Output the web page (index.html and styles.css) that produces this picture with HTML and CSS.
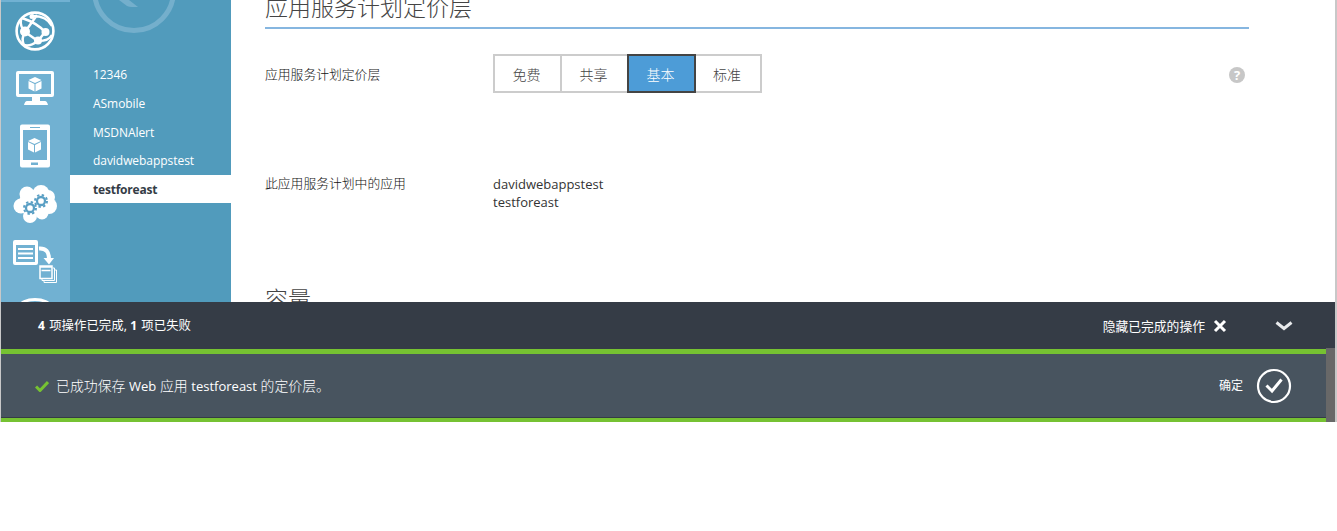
FILE: index.html
```html
<!DOCTYPE html>
<html lang="zh-CN">
<head>
<meta charset="utf-8">
<title>应用服务计划</title>
<link rel="stylesheet" href="styles.css">
</head>
<body>
<div class="portal">
  <div class="workspace">
    <nav class="rail">
      <a class="rail-item active"><svg width="44" height="44" viewBox="0 0 44 44" fill="none" stroke="#fff"><circle cx="22" cy="22" r="18.400" stroke-width="2.600"/><path d="M12 23L24 6M12 23L25 32L32 23M9 9C18 12 26 16 32 23M20 7C28 7 35 9 39 17M8 10C7 16 9 20 12 23M12 23C9 28 9 32 11 36M25 32C18 37 14 37 11 36M25 32C32 32 37 30 39 26" stroke-width="2.500"/><g fill="#fff" stroke="none"><circle cx="12" cy="22.500" r="5"/><circle cx="32.500" cy="23" r="4"/><circle cx="25" cy="31.500" r="4"/><circle cx="19" cy="7.500" r="2.500"/></g></svg></a>
      <a class="rail-item"><svg width="44" height="44" viewBox="0 0 44 44"><path fill="#fff" fill-rule="evenodd" d="M5 5H39Q41 5 41 7V29Q41 31 39 31H27V35H32Q34 35 35 39H11Q12 35 14 35H19V31H5Q3 31 3 29V7Q3 5 5 5ZM6 8V28H38V8Z"/><path fill="#fff" d="M22 11L28.500 14L22 17L15.500 14ZM15.500 15L21.500 18V25.500L15.500 22.500ZM28.500 15L22.500 18V25.500L28.500 22.500Z"/></svg></a>
      <a class="rail-item"><svg width="44" height="44" viewBox="0 0 44 44"><path fill="#fff" fill-rule="evenodd" d="M9 0.500H35Q37 0.500 37 2.500V41.500Q37 43.500 35 43.500H9Q7 43.500 7 41.500V2.500Q7 .5 9 .5ZM10 6V36H34V6ZM17 3V4H27V3ZM18 38.500V41H25V38.500Z"/><path fill="#fff" d="M21.500 14L28 17L21.500 20L15 17ZM15 18L21 21V28.500L15 25.500ZM28 18L22 21V28.500L28 25.500Z"/></svg></a>
      <a class="rail-item"><svg width="46" height="44" viewBox="0 0 46 44"><g fill="#fff"><circle cx="15" cy="12" r="7.500"/><circle cx="29" cy="11.500" r="8.500"/><circle cx="36" cy="15" r="7"/><circle cx="9" cy="24" r="7.500"/><circle cx="20" cy="21" r="13"/><circle cx="37" cy="24" r="8"/><circle cx="18" cy="34" r="7"/><circle cx="30" cy="31" r="6.500"/></g><g fill="none" stroke="#5a9fc4"><circle cx="18" cy="26" r="4" stroke-width="2.300"/><circle cx="18" cy="26" r="6" stroke-width="2" stroke-dasharray="2.356 2.356"/><circle cx="29" cy="19" r="4" stroke-width="2.300"/><circle cx="29" cy="19" r="6" stroke-width="2" stroke-dasharray="2.356 2.356"/></g></svg></a>
      <a class="rail-item"><svg width="46" height="44" viewBox="0 0 46 44"><path fill="#fff" fill-rule="evenodd" d="M3 1H24Q26 1 26 3V24Q26 26 24 26H3Q1 26 1 24V3Q1 1 3 1ZM4 6V23H23V6Z"/><path stroke="#fff" stroke-width="2" d="M6 10H21M6 14.500H21M6 19H21"/><path fill="none" stroke="#fff" stroke-width="4" d="M27 9.500C34 9 37 13 37 20"/><path fill="#fff" d="M31.500 19H42L37 25.500Z"/><path fill="none" stroke="#fff" d="M41 29H42.500V41.500H30V40M43 31H44.500V43.500H32V42"/><path fill="none" stroke="#fff" stroke-width="1.500" d="M28 27H40V39.500H28ZM28 28H40M29.500 31.500H38.500"/></svg></a>
      <a class="rail-item"><svg width="44" height="44" viewBox="0 0 44 44"><ellipse cx="22" cy="9.500" rx="15" ry="7" fill="none" stroke="#fff" stroke-width="3"/></svg></a>
    </nav>
    <aside class="sidebar">
      <svg class="back" width="84" height="34" viewBox="0 0 84 34" fill="none" stroke="#74afcc"><circle cx="42" cy="-9" r="39.500" stroke-width="5"/><path fill="#74afcc" stroke="none" d="M27 0H37L46 7H40Q37 7 35 6Z"/></svg>
      <ul class="plans"><li>12346</li><li>ASmobile</li><li>MSDNAlert</li><li>davidwebappstest</li><li class="selected">testforeast</li></ul>
    </aside>
    <main class="content">
      <h2 class="heading">应用服务计划定价层</h2>
      <div class="row tier-row">
        <div class="label">应用服务计划定价层</div>
        <div class="tiers"><span class="tier">免费</span><span class="tier">共享</span><span class="tier chosen">基本</span><span class="tier last">标准</span></div>
        <span class="help">?</span>
      </div>
      <div class="row apps-row">
        <div class="label">此应用服务计划中的应用</div>
        <div class="apps"><div>davidwebappstest</div><div>testforeast</div></div>
      </div>
      <h2 class="heading capacity">容量</h2>
    </main>
  </div>
  <div class="summary">
    <div class="summary-text"><b>4</b> 项操作已完成, <b>1</b> 项已失败</div>
    <div class="hide-done">隐藏已完成的操作</div>
    <svg class="close" width="14" height="14" viewBox="0 0 14 14"><path d="M2 2L12 12M12 2L2 12" stroke="#fff" stroke-width="3"/></svg>
    <svg class="chevron" width="18" height="10" viewBox="0 0 18 10"><path d="M1.500 1.500L9 7.500L16.500 1.500" fill="none" stroke="#e8eaec" stroke-width="3"/></svg>
  </div>
  <div class="notices">
    <div class="notice">
      <svg class="tick" width="14" height="12" viewBox="0 0 14 12"><path d="M1 6.500L5 10.500L13 2" fill="none" stroke="#76c232" stroke-width="3"/></svg>
      <div class="message">已成功保存 <span class="latin">Web</span> 应用 <span class="latin">testforeast</span> 的定价层。</div>
      <div class="ok">确定</div>
      <svg class="ok-icon" width="36" height="36" viewBox="0 0 36 36" fill="none" stroke="#fff"><circle cx="18" cy="18" r="16" stroke-width="2.200"/><path d="M10.500 17.500L16 23L25.500 11.500" stroke-width="3"/></svg>
    </div>
    <div class="scrollbar"></div>
  </div>
</div>
</body>
</html>
```
FILE: styles.css
```css
* { box-sizing: border-box; }
body {
  margin: 0;
  background: #fff;
  color: #333;
  font: 13px/18px "Open Sans", "Noto Sans CJK SC", sans-serif;
}
svg { display: block; flex: none; }
.portal {
  width: 1337px;
  height: 422px;
  border-left: 1px solid #c8c8c8;
  border-right: 2px solid #c8c8c8;
  overflow: hidden;
}
.workspace { display: flex; height: 302px; overflow: hidden; }
.rail { flex: none; width: 69px; padding: 2px 2px 0 0; background: #71b1d2; }
.rail-item { display: flex; align-items: center; justify-content: center; height: 57.6px; }
.active { margin-right: -2px; padding-right: 2px; background: #519bbc; }
.sidebar { flex: none; width: 161px; background: #519bbc; }
.back { margin-left: 22px; }
.plans { margin: 26px 0 0; padding: 0; list-style: none; color: #fff; }
.plans li {
  height: 28.8px;
  padding-left: 23px;
  font-size: 12px;
  line-height: 30px;
  letter-spacing: -0.05px;
}
.plans .selected { height: 28px; background: #fff; color: #343c46; font-weight: 700; letter-spacing: -0.2px; }
.content { width: 1018px; padding-left: 34px; }
.heading {
  height: 29px;
  margin: 0;
  border-bottom: 2px solid #86b6e0;
  color: #444;
  font: 300 23px/30px "Noto Sans CJK SC", sans-serif;
}
.heading:first-child { line-height: 13px; }
.row { display: flex; }
.label { width: 228px; font-size: 12.8px; font-weight: 300; color: #111; }
.tier-row { height: 120px; padding-top: 25px; align-items: flex-start; }
.tier-row .label { padding-top: 11px; }
.tiers { display: flex; }
.tier {
  width: 69px;
  height: 39px;
  margin-right: -2px;
  padding-right: 2px;
  border: 2px solid #ccc;
  color: #444;
  font-size: 14px;
  font-weight: 300;
  line-height: 38px;
  text-align: center;
}
.last { width: 68px; }
.chosen { z-index: 1; border-color: #444; background: #4d9cd7; color: #fff; }
.help {
  width: 16px;
  height: 16px;
  margin: 13px 4px 0 auto;
  border-radius: 50%;
  background: #c7c7c7;
  color: #fff;
  font-size: 13px;
  font-weight: 700;
  line-height: 16px;
  text-align: center;
}
.apps-row { height: 134px; padding-top: 26px; }
.apps-row .label { margin-top: -1px; }
.apps { letter-spacing: 0; }
.capacity { border: 0; }
.summary {
  display: flex;
  align-items: center;
  height: 47px;
  padding: 0 42px 0 37px;
  background: #353c46;
  color: #fff;
  font-size: 12.4px;
}
.summary-text { letter-spacing: 0.03px; }
.summary b { margin-right: 1px; font-size: 12px; }
.hide-done { margin-left: auto; font-size: 12.8px; }
.close { margin-left: 8px; }
.chevron { margin-left: 48px; }
.notices { display: flex; height: 73px; background: #353c46; }
.notice {
  display: flex;
  align-items: center;
  width: 1325px;
  height: 73px;
  padding: 0 34px;
  border-top: 5px solid #76c232;
  border-bottom: 4px solid #76c232;
  background: #48545f;
  box-shadow: inset 0 -1px #353c46;
  color: #fff;
}
.message { margin-left: 7px; font-size: 13.9px; font-weight: 300; }
.latin { font-size: 13px; font-weight: 400; }
.ok { margin-left: auto; font-size: 12px; }
.ok-icon { margin-left: 13px; }
.scrollbar { width: 9px; height: 74px; margin-top: -1px; background: #686868; }
```
